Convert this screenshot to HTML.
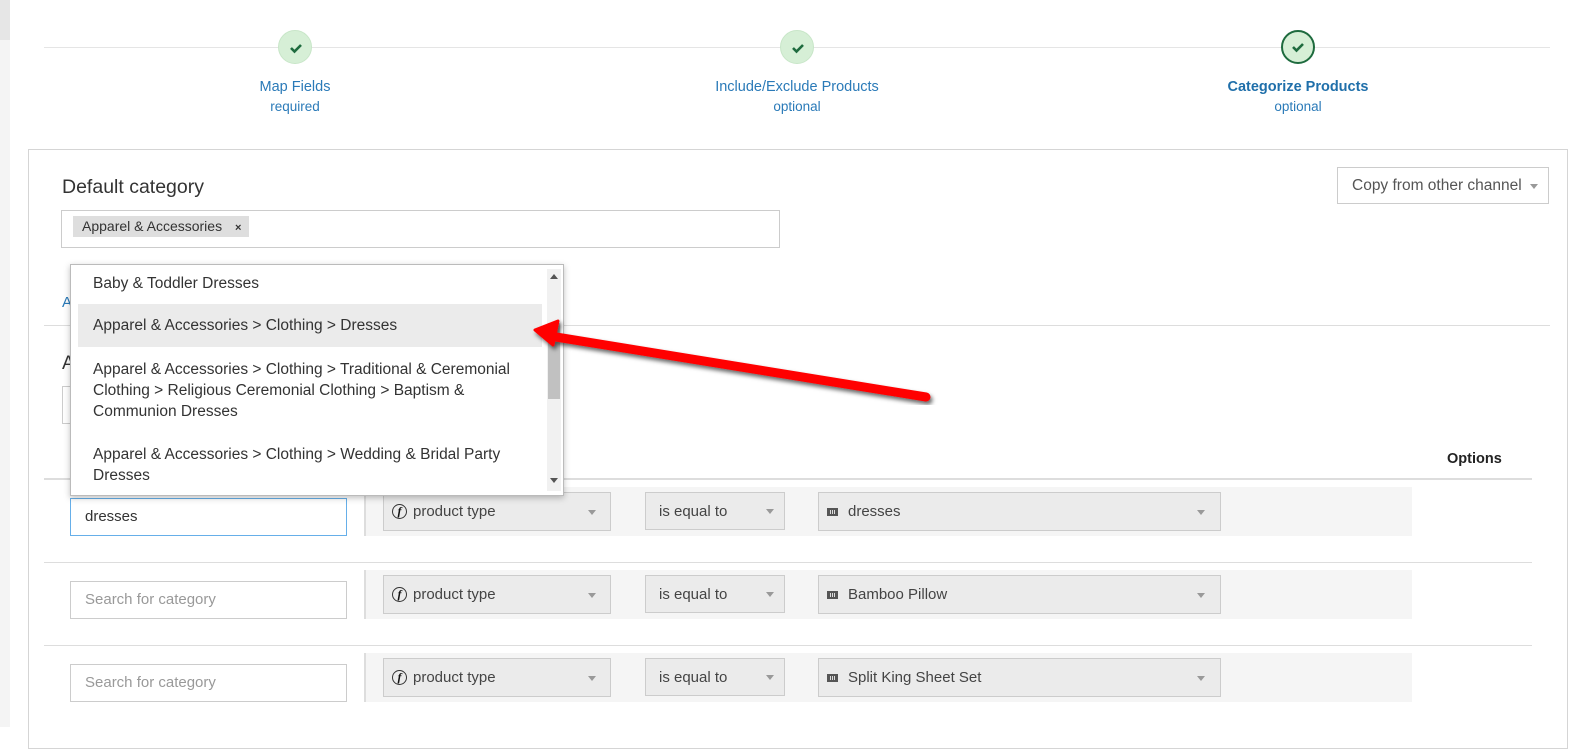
<!DOCTYPE html>
<html><head><style>
*{box-sizing:border-box;margin:0;padding:0}
body{width:1570px;height:727px;background:#fff;font-family:"Liberation Sans",sans-serif;position:relative;overflow:hidden;color:#333}
.a{position:absolute}
.circ{position:absolute;width:34px;height:34px;border-radius:50%;background:#d6efd6;border:1px solid #c8e6c8;top:30px}
.circ svg{position:absolute;left:9px;top:9px}
.lbl{position:absolute;top:78px;width:300px;text-align:center;color:#2a7ab8;font-size:14.5px;line-height:19px}
.lbl small{display:block;font-size:13.5px}
.sel{position:absolute;background:#ebebeb;border:1px solid #ccc;font-size:15px;color:#444;padding-left:8px;display:flex;align-items:center}
.car{position:absolute;right:14px;top:50%;margin-top:-2px;border-left:4px solid transparent;border-right:4px solid transparent;border-top:5px solid #999}
.rowbg{position:absolute;left:364px;width:1048px;height:49px;background:#f5f5f5;border-left:2px solid #ddd}
.inp{position:absolute;left:70px;width:277px;height:38px;border:1px solid #ccc;font-size:15px;color:#999;padding:9px 14px}
.f{display:inline-block;width:15px;height:15px;border:1px solid #333;border-radius:50%;font-style:italic;font-family:"Liberation Serif",serif;font-size:12px;line-height:13px;text-align:center;margin-right:6px;color:#111;font-weight:bold}
.kb{display:inline-block;width:11px;height:8px;border:2px solid #555;background:repeating-linear-gradient(90deg,#555 0 1px,#ddd 1px 2px);margin-right:10px}
.it{position:absolute;left:0;padding:0 22px;font-size:15.5px;line-height:21px;color:#333;width:470px}
</style></head><body>
<div class="a" style="left:0;top:0;width:10px;height:40px;background:#e6e6e6"></div>
<div class="a" style="left:0;top:40px;width:10px;height:687px;background:#f4f4f4"></div>
<div class="a" style="left:44px;top:47px;width:1506px;height:1px;background:#e5e5e5"></div>
<div class="circ" style="left:278px"><svg width="16" height="16" viewBox="0 0 16 16"><path d="M3 8l3.5 3.5L13 5" stroke="#1e6b3e" stroke-width="2.6" fill="none"/></svg></div>
<div class="circ" style="left:780px"><svg width="16" height="16" viewBox="0 0 16 16"><path d="M3 8l3.5 3.5L13 5" stroke="#1e6b3e" stroke-width="2.6" fill="none"/></svg></div>
<div class="circ" style="left:1281px;border:2px solid #1e6b3e"><svg width="16" height="16" viewBox="0 0 16 16" style="left:7px;top:7px"><path d="M3 8l3.5 3.5L13 5" stroke="#1e6b3e" stroke-width="2.6" fill="none"/></svg></div>
<div class="lbl" style="left:145px">Map Fields<small>required</small></div>
<div class="lbl" style="left:647px">Include/Exclude Products<small>optional</small></div>
<div class="lbl" style="left:1148px;font-weight:bold;color:#1f6faa">Categorize Products<small style="font-weight:normal;color:#2a7ab8">optional</small></div>

<div class="a" style="left:28px;top:149px;width:1540px;height:600px;border:1px solid #d5d5d5"></div>
<div class="a" style="left:62px;top:176px;font-size:19.5px;color:#333">Default category</div>
<div class="a" style="left:1337px;top:167px;width:212px;height:37px;border:1px solid #ccc;font-size:15.5px;color:#555;padding:9px 14px;white-space:nowrap">Copy from other channel<span class="car" style="right:10px"></span></div>
<div class="a" style="left:61px;top:210px;width:719px;height:38px;border:1px solid #ccc"></div>
<div class="a" style="left:73px;top:216px;width:176px;height:21px;background:#dedede;font-size:14px;padding:2px 9px;color:#333;white-space:nowrap">Apparel &amp; Accessories <span style="margin-left:9px;font-size:11px;font-weight:bold">×</span></div>
<div class="a" style="left:62px;top:294px;color:#2a7ab8;font-size:15px">A</div>
<div class="a" style="left:44px;top:325px;width:1506px;height:1px;background:#ddd"></div>
<div class="a" style="left:62px;top:353px;font-size:19px">A</div>
<div class="a" style="left:62px;top:386px;width:20px;height:38px;border:1px solid #ccc"></div>
<div class="a" style="left:1447px;top:451px;font-size:14.5px;font-weight:bold;color:#222">Options</div>
<div class="a" style="left:44px;top:478px;width:1488px;height:2px;background:#ddd"></div>

<div class="rowbg" style="top:487px"></div>
<div class="a" style="top:562px;height:1px;background:#ddd;left:44px;width:1488px"></div>
<div class="rowbg" style="top:570px"></div>
<div class="a" style="top:645px;height:1px;background:#ddd;left:44px;width:1488px"></div>
<div class="rowbg" style="top:653px"></div>

<div class="inp" style="top:498px;border-color:#66afe9;color:#333">dresses</div>
<div class="inp" style="top:581px">Search for category</div>
<div class="inp" style="top:664px">Search for category</div>

<div class="sel" style="left:383px;top:492px;width:228px;height:39px"><span class="f">f</span>product type<span class="car"></span></div>
<div class="sel" style="left:645px;top:492px;width:140px;height:38px;padding-left:13px">is equal to<span class="car" style="right:10px"></span></div>
<div class="sel" style="left:818px;top:492px;width:403px;height:39px"><span class="kb"></span>dresses<span class="car" style="right:15px"></span></div>
<div class="sel" style="left:383px;top:575px;width:228px;height:39px"><span class="f">f</span>product type<span class="car"></span></div>
<div class="sel" style="left:645px;top:575px;width:140px;height:38px;padding-left:13px">is equal to<span class="car" style="right:10px"></span></div>
<div class="sel" style="left:818px;top:575px;width:403px;height:39px"><span class="kb"></span>Bamboo Pillow<span class="car" style="right:15px"></span></div>
<div class="sel" style="left:383px;top:658px;width:228px;height:39px"><span class="f">f</span>product type<span class="car"></span></div>
<div class="sel" style="left:645px;top:658px;width:140px;height:38px;padding-left:13px">is equal to<span class="car" style="right:10px"></span></div>
<div class="sel" style="left:818px;top:658px;width:403px;height:39px"><span class="kb"></span>Split King Sheet Set<span class="car" style="right:15px"></span></div>

<div class="a" style="left:70px;top:264px;width:494px;height:232px;background:#fff;border:1px solid #bbb;box-shadow:0 2px 6px rgba(0,0,0,.25)">
 <div class="it" style="top:8px">Baby &amp; Toddler Dresses</div>
 <div style="position:absolute;top:39px;left:7px;width:464px;height:43px;background:#ebebeb"></div>
 <div class="it" style="top:50px">Apparel &amp; Accessories &gt; Clothing &gt; Dresses</div>
 <div class="it" style="top:94px">Apparel &amp; Accessories &gt; Clothing &gt; Traditional &amp; Ceremonial Clothing &gt; Religious Ceremonial Clothing &gt; Baptism &amp; Communion Dresses</div>
 <div class="it" style="top:179px;width:460px">Apparel &amp; Accessories &gt; Clothing &gt; Wedding &amp; Bridal Party Dresses</div>
 <div style="position:absolute;left:476px;top:4px;width:14px;height:222px;background:#f1f1f1"></div>
 <div style="position:absolute;left:477px;top:58px;width:12px;height:76px;background:#c1c1c1"></div>
 <div style="position:absolute;left:479px;top:9px;border-left:4px solid transparent;border-right:4px solid transparent;border-bottom:5px solid #555"></div>
 <div style="position:absolute;left:479px;top:213px;border-left:4px solid transparent;border-right:4px solid transparent;border-top:5px solid #555"></div>
</div>

<svg class="a" style="left:520px;top:310px" width="430" height="110" viewBox="520 310 430 110">
<defs><filter id="s"><feDropShadow dx="2" dy="3" stdDeviation="2" flood-color="#000" flood-opacity=".6"/></filter></defs>
<g filter="url(#s)" fill="#f00">
<path d="M556 337 L926 397" stroke="#f00" stroke-width="9" stroke-linecap="round"/>
<path d="M535 330 L558 321 L553 345 Z" stroke="#f00" stroke-width="3" stroke-linejoin="round"/>
</g></svg>
</body></html>
